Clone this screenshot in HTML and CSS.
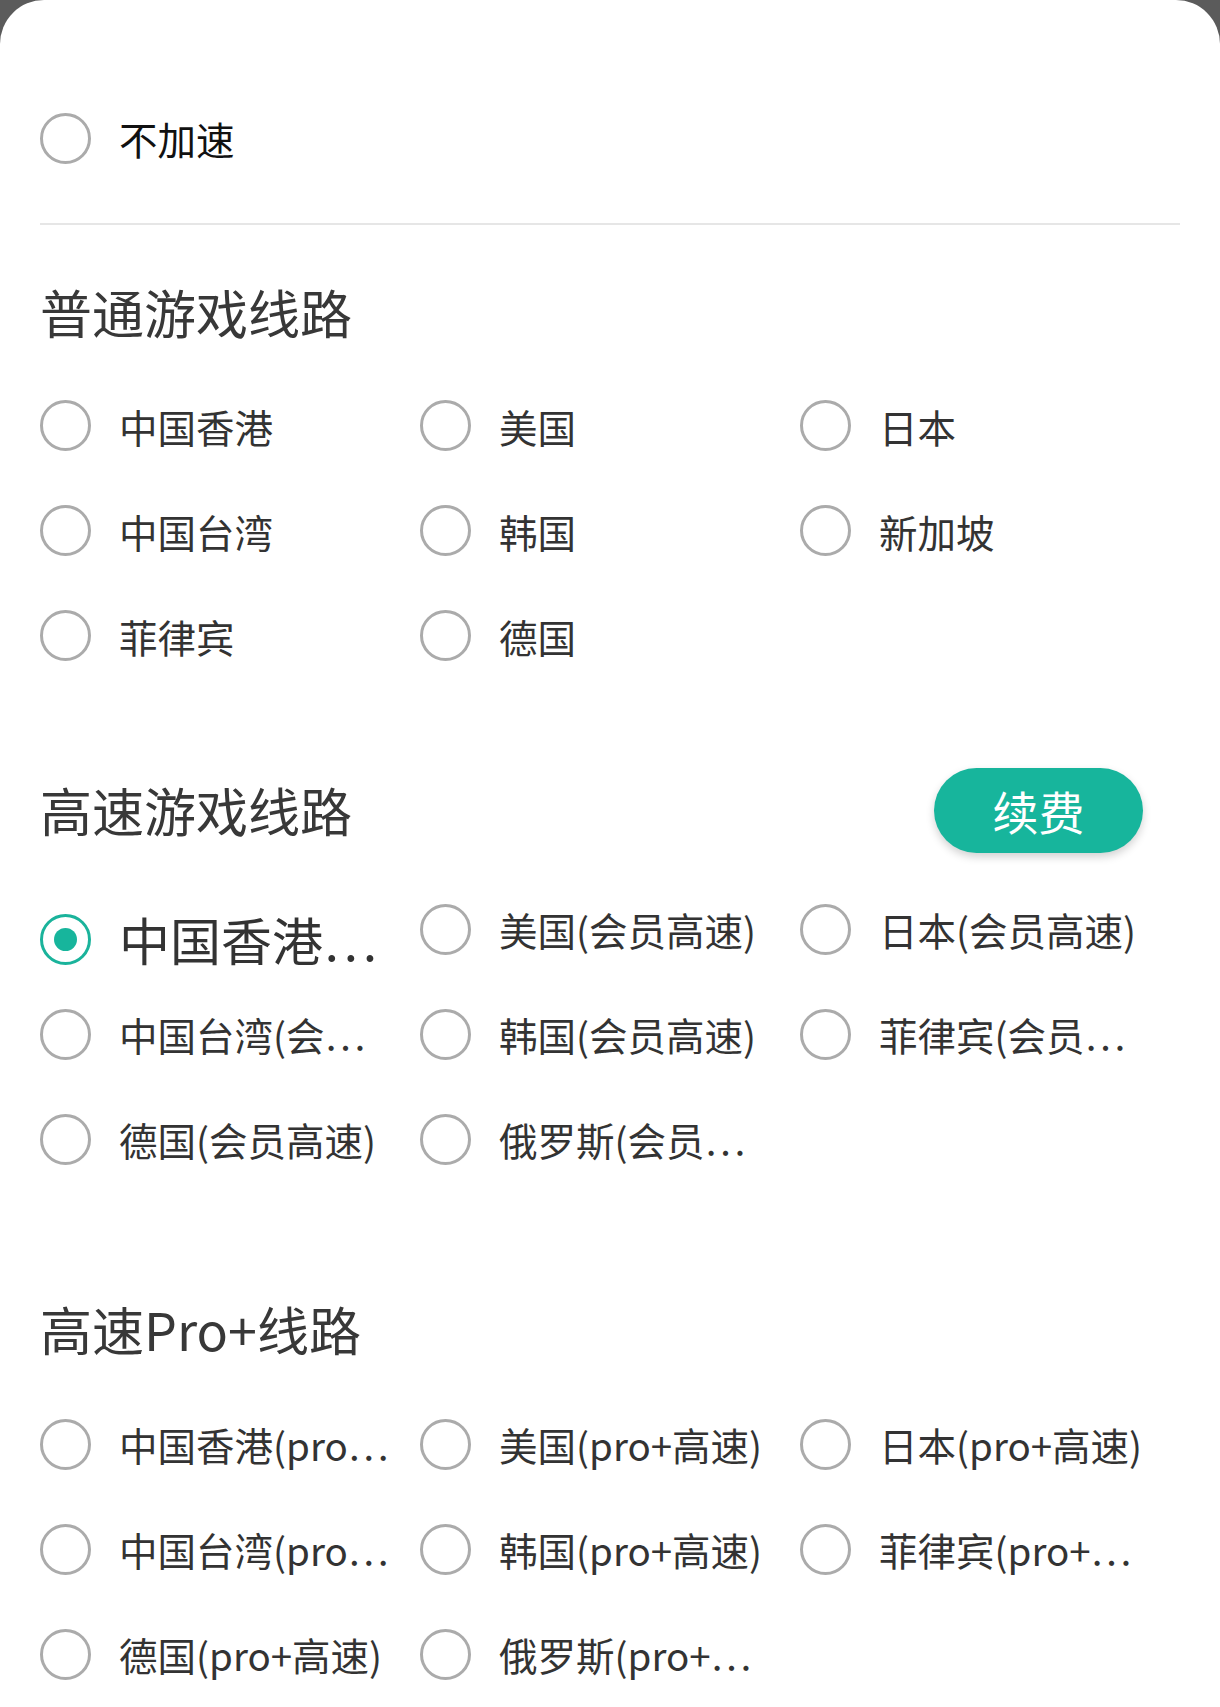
FILE: index.html
```html
<!DOCTYPE html>
<html lang="zh-CN">
<head>
<meta charset="utf-8">
<title>线路选择</title>
<link rel="stylesheet" href="styles.css">
</head>
<body>
<div class="sheet">
  <div class="none-row">
    <div class="opt"><span class="radio"></span><span class="label label-dark">不加速</span></div>
  </div>
  <div class="divider"></div>

  <section class="group group-normal">
    <div class="group-head"><h2 class="group-title">普通游戏线路</h2></div>
    <div class="grid">
      <div class="opt"><span class="radio"></span><span class="label">中国香港</span></div>
      <div class="opt"><span class="radio"></span><span class="label">美国</span></div>
      <div class="opt"><span class="radio"></span><span class="label">日本</span></div>
      <div class="opt"><span class="radio"></span><span class="label">中国台湾</span></div>
      <div class="opt"><span class="radio"></span><span class="label">韩国</span></div>
      <div class="opt"><span class="radio"></span><span class="label">新加坡</span></div>
      <div class="opt"><span class="radio"></span><span class="label">菲律宾</span></div>
      <div class="opt"><span class="radio"></span><span class="label">德国</span></div>
    </div>
  </section>

  <section class="group group-fast">
    <div class="group-head">
      <h2 class="group-title">高速游戏线路</h2>
      <button class="renew">续费</button>
    </div>
    <div class="grid grid-fast">
      <div class="opt sel"><span class="radio"></span><span class="label">中国香港(会员高速)</span></div>
      <div class="opt"><span class="radio"></span><span class="label">美国(会员高速)</span></div>
      <div class="opt"><span class="radio"></span><span class="label">日本(会员高速)</span></div>
      <div class="opt"><span class="radio"></span><span class="label">中国台湾(会员高速)</span></div>
      <div class="opt"><span class="radio"></span><span class="label">韩国(会员高速)</span></div>
      <div class="opt"><span class="radio"></span><span class="label">菲律宾(会员高速)</span></div>
      <div class="opt"><span class="radio"></span><span class="label">德国(会员高速)</span></div>
      <div class="opt"><span class="radio"></span><span class="label">俄罗斯(会员高速)</span></div>
    </div>
  </section>

  <section class="group group-pro">
    <div class="group-head"><h2 class="group-title">高速Pro+线路</h2></div>
    <div class="grid grid-pro">
      <div class="opt"><span class="radio"></span><span class="label">中国香港(pro+高速)</span></div>
      <div class="opt"><span class="radio"></span><span class="label">美国(pro+高速)</span></div>
      <div class="opt"><span class="radio"></span><span class="label">日本(pro+高速)</span></div>
      <div class="opt"><span class="radio"></span><span class="label">中国台湾(pro+高速)</span></div>
      <div class="opt"><span class="radio"></span><span class="label">韩国(pro+高速)</span></div>
      <div class="opt"><span class="radio"></span><span class="label">菲律宾(pro+高速)</span></div>
      <div class="opt"><span class="radio"></span><span class="label">德国(pro+高速)</span></div>
      <div class="opt"><span class="radio"></span><span class="label">俄罗斯(pro+高速)</span></div>
    </div>
  </section>
</div>
</body>
</html>
```

FILE: styles.css
```css
* { box-sizing: border-box; }

html, body {
  margin: 0;
  padding: 0;
}

body {
  background: #5b5b5b;
  font-family: "Noto Sans CJK SC", "Noto Sans", sans-serif;
  color: #333;
}

.sheet {
  background: #ffffff;
  border-radius: 44px 44px 0 0;
  min-height: 1707px;
  padding: 0 40px;
  overflow: hidden;
}

.none-row {
  padding-top: 86px;
  height: 190px;
}

.none-row .opt {
  margin-top: 25px;
}

.divider {
  height: 2px;
  background: #e6e6e6;
  margin-top: 33px;
}

.group-head {
  display: flex;
  align-items: center;
  justify-content: space-between;
  height: 60px;
}

.group-title {
  margin: 0;
  font-size: 52px;
  line-height: 60px;
  font-weight: 400;
  color: #383838;
}

.group-normal { margin-top: 57px; }
.group-normal .grid { margin-top: 31px; }

.group-fast { margin-top: 92px; }
.group-fast .grid { margin-top: 36.5px; }

.group-pro { margin-top: 107.5px; }
.group-pro .grid { margin-top: 32.5px; }

.renew {
  width: 209px;
  height: 85px;
  margin-right: 37px;
  border: none;
  border-radius: 43px;
  background: #17b59c;
  color: #ffffff;
  font-family: inherit;
  font-size: 46px;
  line-height: 85px;
  padding: 0;
  text-align: center;
  box-shadow: 0 4px 9px rgba(0, 0, 0, 0.18);
  flex-shrink: 0;
}

.grid {
  display: grid;
  grid-template-columns: repeat(3, 1fr);
  grid-auto-rows: 105px;
  align-items: start;
}

.opt {
  display: flex;
  align-items: center;
  height: 54px;
  margin-top: 25.5px;
}

.radio {
  width: 51px;
  height: 51px;
  border: 3px solid #ababab;
  border-radius: 50%;
  flex-shrink: 0;
  margin-right: 28px;
  display: flex;
  align-items: center;
  justify-content: center;
}

.label {
  font-size: 38.5px;
  line-height: 54px;
  color: #333;
  white-space: nowrap;
  overflow: hidden;
  text-overflow: ellipsis;
  max-width: 270px;
  font-feature-settings: "pwid" 1;
}

.label-dark {
  color: #111;
}

.opt.sel {
  height: 74px;
}

.opt.sel .radio {
  border-color: #1ab39b;
}

.opt.sel .radio::after {
  content: "";
  width: 23px;
  height: 23px;
  border-radius: 50%;
  background: #17b59c;
}

.opt.sel .label {
  font-size: 51px;
  line-height: 74px;
  max-width: 264px;
}
```
